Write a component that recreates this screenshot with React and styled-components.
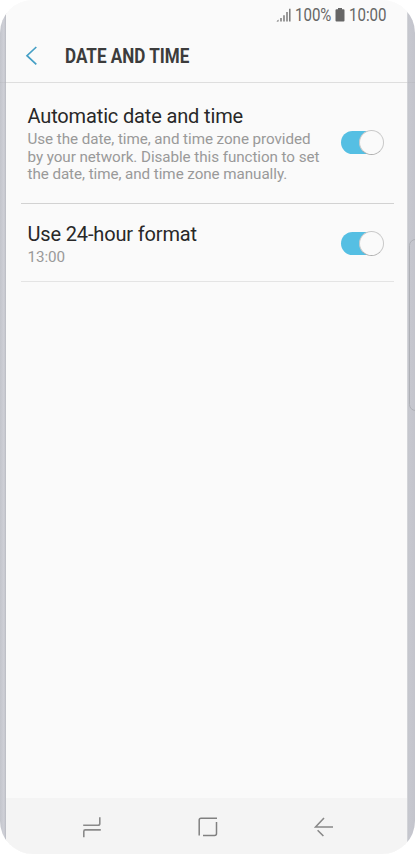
import React from 'react';
import styled, { createGlobalStyle } from 'styled-components';

const GlobalStyle = createGlobalStyle`
  * { box-sizing: border-box; }
  html, body { margin: 0; background: #fff; }
  body { font-family: Roboto, "Liberation Sans", sans-serif; overflow: hidden; }
`;

const Phone = styled.div`
  position: relative;
  width: 415px;
  height: 854px;
  padding: 0 8px 0 6px;
  border-radius: 33px;
  overflow: hidden;
  background: linear-gradient(90deg, #c3c5cc 0, #cfd0d7 4px, #b9bbc2 6px, #fafafa 7px, #fafafa 406px, #c4c6cc 408px, #c6c7cf 410px, #c3c4cc 415px);
`;

const Screen = styled.main`
  height: 100%;
  display: flex;
  flex-direction: column;
  background: #fafafa;
`;

const StatusBar = styled.header`
  height: 30px;
  padding: 0 21px 0 0;
  display: flex;
  justify-content: flex-end;
  align-items: center;
  gap: 4px;
  color: #666;
  svg { flex: none; display: block; }
`;

const Fit = styled.span`
  display: block;
  flex: none;
  width: ${p => p.$width}px;
  white-space: nowrap;
  > span {
    display: inline-block;
    transform: scaleX(${p => p.$scale});
    transform-origin: left center;
  }
`;

const StatusText = styled(Fit)`
  font-size: 17.5px;
  line-height: 30px;
`;

const TitleBar = styled.div`
  height: 53px;
  display: flex;
  align-items: center;
  padding: 0 0 0 18px;
  border-bottom: 1px solid #e8e8e8;
  svg { flex: none; margin-right: 26px; }
`;

const Title = styled.h1`
  margin: 2px 0 0;
  color: #3c3c3c;
  font-size: 19.5px;
  line-height: 24px;
  font-weight: 700;
`;

const Settings = styled.section`
  flex: 1;
  padding: 0 13px 0 15px;
`;

const Row = styled.div`
  height: ${p => p.$height}px;
  display: flex;
  justify-content: space-between;
  padding: ${p => p.$top}px 10px 0 6.5px;
  border-bottom: 1px solid ${p => p.$line};
`;

const Label = styled.div`
  color: #282828;
  font-size: 20px;
  line-height: 24px;
  letter-spacing: -0.15px;
`;

const Detail = styled.div`
  margin-top: 3px;
  color: #999;
  font-size: 15.2px;
  line-height: 17.7px;
  letter-spacing: -0.06px;
`;

const Switch = styled.button`
  flex: none;
  width: 43px;
  height: 23px;
  padding: 0;
  border: 0;
  border-radius: 12px;
  margin-top: ${p => p.$top}px;
  display: flex;
  align-items: center;
  justify-content: flex-end;
  background: linear-gradient(90deg, #55bfe3 32px, transparent 32px);
`;

const Thumb = styled.span`
  flex: none;
  width: 25px;
  height: 25px;
  border-radius: 50%;
  background: #fafafa;
  border: 1px solid #c9c9c9;
  border-bottom-color: #b0b0b0;
`;

const NavBar = styled.nav`
  height: 56px;
  flex: none;
  display: grid;
  grid-template-columns: repeat(3, 116px);
  justify-content: center;
  justify-items: center;
  align-items: center;
  padding: 2px 0 0 2px;
  background: #f4f4f4;
  svg { display: block; }
`;

const SideButton = styled.span`
  position: absolute;
  right: -7px;
  top: 239px;
  width: 13px;
  height: 172px;
  border: 1px solid #adafb5;
  border-radius: 7px;
`;

const HeaderEdge = styled.span`
  position: absolute;
  left: 0;
  top: 82px;
  width: 415px;
  height: 1px;
  background: rgba(120, 120, 120, 0.08);
`;

const Signal = () => (
  <svg width="15" height="15" viewBox="0 0 15 15" stroke="#707070" strokeWidth="1.4">
    <path d="M.5 13.5h2v-2z" fill="#666" stroke="none" />
    <path d="M5 13.5V10M8 13.5V7.3M11 13.5V4M13.8 13.5V.7" />
  </svg>
);

const Battery = () => (
  <svg width="10" height="14" viewBox="0 0 10 14" fill="#666">
    <path d="M3 0h4v1.2h1.5Q9.5 1.2 9.5 2.2V12.5Q9.5 13.5 8.5 13.5h-7Q.5 13.5.5 12.5V2.2Q.5 1.2 1.5 1.2H3z" />
  </svg>
);

function Setting({ label, children, height, top, line, switchTop }) {
  return (
    <Row $height={height} $top={top} $line={line}>
      <div>
        <Label>{label}</Label>
        <Detail>{children}</Detail>
      </div>
      <Switch role="switch" aria-checked="true" aria-label={label} $top={switchTop}><Thumb /></Switch>
    </Row>
  );
}

export default function App() {
  return (
    <>
      <GlobalStyle />
      <Phone>
        <Screen>
          <StatusBar>
            <Signal />
            <StatusText as="div" $width={36} $scale={0.86}><span>100%</span></StatusText>
            <Battery />
            <StatusText as="div" $width={37} $scale={0.86}><span>10:00</span></StatusText>
          </StatusBar>
          <TitleBar>
            <svg width="15" height="20" viewBox="0 0 15 20" fill="none" stroke="#459fc5" strokeWidth="1.7">
              <path d="M12.3 1 3 9.7l9.3 8.7" />
            </svg>
            <Title><Fit $width={126} $scale={0.875}><span>DATE AND TIME</span></Fit></Title>
          </TitleBar>
          <Settings>
            <Setting label="Automatic date and time" height={121} top={21} line="#d2d2d2" switchTop={27}>
              Use the date, time, and time zone provided<br />
              by your network. Disable this function to set<br />
              the date, time, and time zone manually.
            </Setting>
            <Setting label="Use 24-hour format" height={78} top={18} line="#e4e4e4" switchTop={10}>
              13:00
            </Setting>
          </Settings>
          <NavBar>
            <svg width="20" height="22" viewBox="0 0 20 22" fill="none" stroke="#8a8a8a" strokeWidth="1.6">
              <path d="M1.2 9.3H16q1.8 0 1.8-1.8V1.2M1.8 21.2V15.4q0-1.5 1.5-1.5h15.5" />
            </svg>
            <svg width="20" height="20" viewBox="0 0 20 20" fill="none" stroke="#808080" strokeWidth="1.5">
              <path d="M1.2 18.5V3q0-1.8 1.8-1.8h16M18.5 5v11.5q0 2-2 2H5" />
            </svg>
            <svg width="20" height="20" viewBox="0 0 20 20" fill="none" stroke="#888" strokeWidth="1.6">
              <path d="M19 10H1.5L10 1M3.6 13.2l5.8 5.8" />
            </svg>
          </NavBar>
        </Screen>
        <SideButton />
        <HeaderEdge />
      </Phone>
    </>
  );
}
